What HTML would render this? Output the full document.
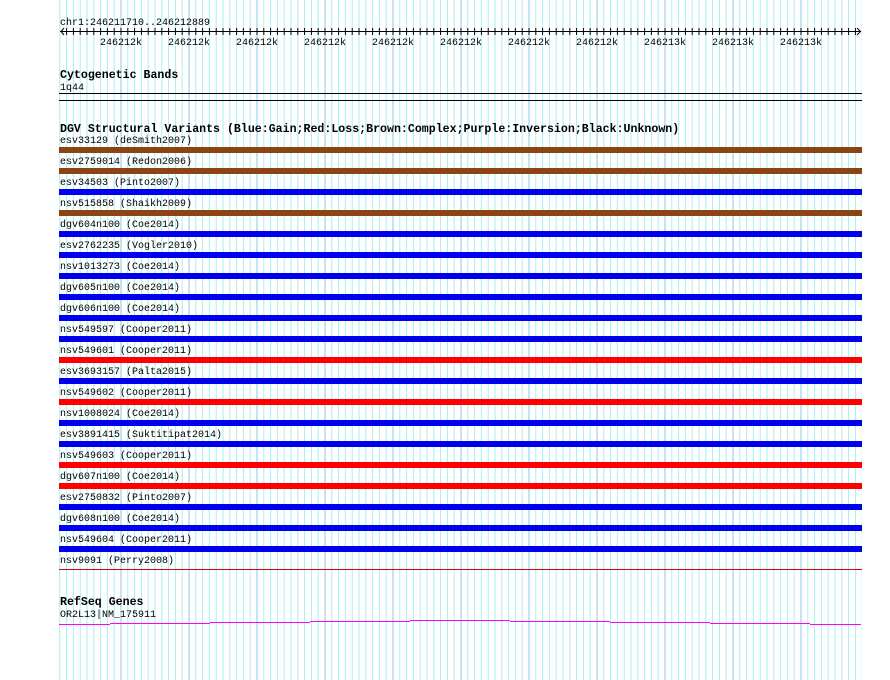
<!DOCTYPE html>
<html><head><meta charset="utf-8"><style>
html,body{margin:0;padding:0;background:#fff;}
svg{display:block;}
text{font-family:"Liberation Mono","DejaVu Sans Mono",monospace;font-size:10px;fill:#000;}
.h{font-weight:bold;font-size:11.6px;}
</style></head><body>
<svg width="890" height="680" viewBox="0 0 890 680" xmlns="http://www.w3.org/2000/svg">
<defs>
<pattern id="mn" patternUnits="userSpaceOnUse" x="59.3" y="0" width="6.8" height="680"><rect x="0" y="0" width="1" height="680" fill="#a8eef0"/></pattern>
<pattern id="mj" patternUnits="userSpaceOnUse" x="120.5" y="0" width="68" height="680"><rect x="0" y="0" width="1" height="680" fill="#90c4e8"/></pattern>
<pattern id="tk" patternUnits="userSpaceOnUse" x="59.3" y="0" width="6.8" height="680"><rect x="0" y="0" width="1" height="680" fill="#000"/></pattern>
</defs>
<rect x="59" y="0" width="803" height="680" fill="url(#mn)"/>
<rect x="120" y="0" width="742" height="680" fill="url(#mj)"/>

<text x="60" y="25">chr1:246211710..246212889</text>
<rect x="60" y="31" width="801" height="1" fill="#000"/>
<rect x="62" y="28" width="797" height="7" fill="url(#tk)"/>
<path d="M64 28 L61 31.5 L64 35 M857 28 L860.5 31.5 L857 35" stroke="#000" fill="none"/>
<g text-anchor="middle">
<text x="121" y="45">246212k</text><text x="189" y="45">246212k</text><text x="257" y="45">246212k</text><text x="325" y="45">246212k</text><text x="393" y="45">246212k</text><text x="461" y="45">246212k</text><text x="529" y="45">246212k</text><text x="597" y="45">246212k</text><text x="665" y="45">246213k</text><text x="733" y="45">246213k</text><text x="801" y="45">246213k</text>
</g>

<text class="h" x="60" y="78">Cytogenetic Bands</text>
<text x="60" y="90">1q44</text>
<rect x="59" y="93" width="803" height="1" fill="#000"/>
<rect x="59" y="100" width="803" height="1" fill="#000"/>

<text class="h" x="60" y="132">DGV Structural Variants (Blue:Gain;Red:Loss;Brown:Complex;Purple:Inversion;Black:Unknown)</text>
<text x="60" y="143">esv33129 (deSmith2007)</text>
<rect x="59" y="147" width="803" height="6" fill="#8b4513"/>
<text x="60" y="164">esv2759014 (Redon2006)</text>
<rect x="59" y="168" width="803" height="6" fill="#8b4513"/>
<text x="60" y="185">esv34503 (Pinto2007)</text>
<rect x="59" y="189" width="803" height="6" fill="#0000ee"/>
<text x="60" y="206">nsv515858 (Shaikh2009)</text>
<rect x="59" y="210" width="803" height="6" fill="#8b4513"/>
<text x="60" y="227">dgv604n100 (Coe2014)</text>
<rect x="59" y="231" width="803" height="6" fill="#0000ee"/>
<text x="60" y="248">esv2762235 (Vogler2010)</text>
<rect x="59" y="252" width="803" height="6" fill="#0000ee"/>
<text x="60" y="269">nsv1013273 (Coe2014)</text>
<rect x="59" y="273" width="803" height="6" fill="#0000ee"/>
<text x="60" y="290">dgv605n100 (Coe2014)</text>
<rect x="59" y="294" width="803" height="6" fill="#0000ee"/>
<text x="60" y="311">dgv606n100 (Coe2014)</text>
<rect x="59" y="315" width="803" height="6" fill="#0000ee"/>
<text x="60" y="332">nsv549597 (Cooper2011)</text>
<rect x="59" y="336" width="803" height="6" fill="#0000ee"/>
<text x="60" y="353">nsv549601 (Cooper2011)</text>
<rect x="59" y="357" width="803" height="6" fill="#ff0000"/>
<text x="60" y="374">esv3693157 (Palta2015)</text>
<rect x="59" y="378" width="803" height="6" fill="#0000ee"/>
<text x="60" y="395">nsv549602 (Cooper2011)</text>
<rect x="59" y="399" width="803" height="6" fill="#ff0000"/>
<text x="60" y="416">nsv1008024 (Coe2014)</text>
<rect x="59" y="420" width="803" height="6" fill="#0000ee"/>
<text x="60" y="437">esv3891415 (Suktitipat2014)</text>
<rect x="59" y="441" width="803" height="6" fill="#0000ee"/>
<text x="60" y="458">nsv549603 (Cooper2011)</text>
<rect x="59" y="462" width="803" height="6" fill="#ff0000"/>
<text x="60" y="479">dgv607n100 (Coe2014)</text>
<rect x="59" y="483" width="803" height="6" fill="#ff0000"/>
<text x="60" y="500">esv2750832 (Pinto2007)</text>
<rect x="59" y="504" width="803" height="6" fill="#0000ee"/>
<text x="60" y="521">dgv608n100 (Coe2014)</text>
<rect x="59" y="525" width="803" height="6" fill="#0000ee"/>
<text x="60" y="542">nsv549604 (Cooper2011)</text>
<rect x="59" y="546" width="803" height="6" fill="#0000ee"/>
<text x="60" y="563">nsv9091 (Perry2008)</text>
<rect x="59" y="569" width="803" height="1" fill="#dd0000"/>

<text class="h" x="60" y="605">RefSeq Genes</text>
<text x="60" y="617">OR2L13|NM_175911</text>
<g fill="#ff00ff">
<rect x="59" y="624" width="51" height="1"/>
<rect x="110" y="623" width="100" height="1"/>
<rect x="210" y="622" width="100" height="1"/>
<rect x="310" y="621" width="100" height="1"/>
<rect x="410" y="620" width="100" height="1"/>
<rect x="510" y="621" width="100" height="1"/>
<rect x="610" y="622" width="100" height="1"/>
<rect x="710" y="623" width="100" height="1"/>
<rect x="810" y="624" width="51" height="1"/>
</g>
</svg>
</body></html>
